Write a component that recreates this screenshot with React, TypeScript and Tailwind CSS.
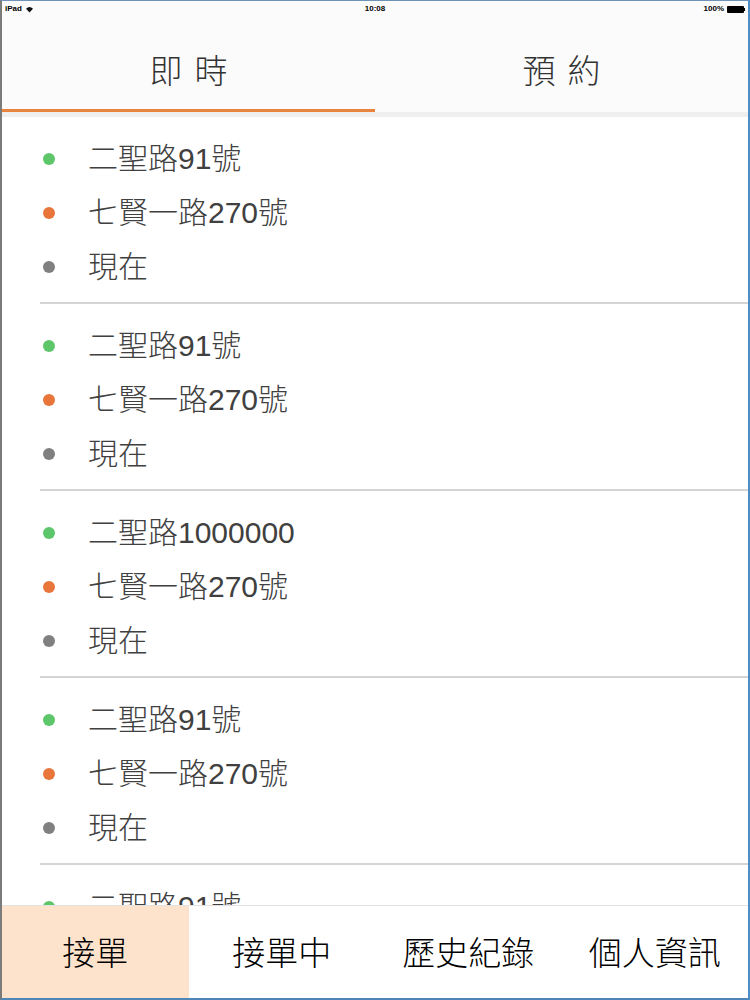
import React from "react";

const groups = [
  ["二聖路91號", "七賢一路270號", "現在"],
  ["二聖路91號", "七賢一路270號", "現在"],
  ["二聖路1000000", "七賢一路270號", "現在"],
  ["二聖路91號", "七賢一路270號", "現在"],
  ["二聖路91號", "七賢一路270號", "現在"],
];

const dotColors = ["bg-[#5dc66a]", "bg-[#e8763a]", "bg-[#808080]"];

function Group({ rows }: { rows: string[] }) {
  return (
    <div className="pt-[15px]">
      <div className="flex flex-col">
        {rows.map((r, i) => (
          <div key={i} className="flex items-center h-[54px]">
            <div className="w-[86px] flex items-center">
              <span className={`ml-[41px] w-[12px] h-[12px] rounded-full ${dotColors[i]}`} />
            </div>
            <span
              className="text-[30px] text-[#404040] leading-none font-light"
              style={{ fontFamily: '"Liberation Sans", "Noto Sans CJK TC", sans-serif' }}
            >
              {r}
            </span>
          </div>
        ))}
      </div>
      <div className="mt-[8px] ml-[38px] h-[2px] bg-[#d4d4d4]" />
    </div>
  );
}

export default function App() {
  const cjk = { fontFamily: '"Noto Sans CJK TC", sans-serif' };
  return (
    <div
      className="w-[750px] h-[1000px] flex flex-col bg-white overflow-hidden border-l-2 border-l-[#7b7b7b] border-r-2 border-r-[#4d8ec7] border-t border-t-[#6e93b8] border-b-2 border-b-[#4f86b8]"
      style={{ fontFamily: '"Liberation Sans", "Noto Sans CJK TC", sans-serif' }}
    >
      {/* status bar */}
      <div className="h-[16px] flex items-center justify-between px-[3px] text-[8px] text-black bg-[#fbfbfb] relative shrink-0">
        <div className="flex items-center gap-[3px]">
          <span className="font-semibold">iPad</span>
          <svg width="9" height="7" viewBox="0 0 10 8">
            <path d="M5 7.5 L1 3 A6 6 0 0 1 9 3 Z" fill="#111" />
          </svg>
        </div>
        <span className="absolute left-1/2 -translate-x-1/2 font-semibold">10:08</span>
        <div className="flex items-center gap-[3px]">
          <span className="font-semibold">100%</span>
          <div className="flex items-center">
            <div className="w-[17px] h-[7px] bg-black rounded-[1px]" />
            <div className="w-[1px] h-[3px] bg-black" />
          </div>
        </div>
      </div>
      {/* tabs */}
      <div className="h-[95px] flex bg-[#fbfbfb] shrink-0">
        <div className="flex-1 flex flex-col">
          <div className="flex-1 flex items-center justify-center pt-[14px]">
            <span className="text-[33px] text-[#333] tracking-[12px] pl-[12px] font-light" style={cjk}>即時</span>
          </div>
          <div className="h-[3px] bg-[#e8843e]" />
        </div>
        <div className="flex-1 flex flex-col">
          <div className="flex-1 flex items-center justify-center pt-[14px]">
            <span className="text-[33px] text-[#333] tracking-[12px] pl-[12px] font-light" style={cjk}>預約</span>
          </div>
          <div className="h-[3px]" />
        </div>
      </div>
      <div className="h-[5px] bg-[#efefef] shrink-0" />
      {/* list */}
      <div className="flex-1 overflow-hidden">
        {groups.map((g, i) => (
          <Group key={i} rows={g} />
        ))}
      </div>
      {/* bottom nav */}
      <div className="h-[93px] shrink-0 flex border-t border-t-[#e2e2e2] bg-white">
        {["接單", "接單中", "歷史紀錄", "個人資訊"].map((t, i) => (
          <div
            key={t}
            className={`flex-1 flex items-center justify-center pb-[2px] ${i === 0 ? "bg-[#fde3cc]" : ""}`}
          >
            <span className="text-[33px] text-black leading-none font-light" style={cjk}>{t}</span>
          </div>
        ))}
      </div>
    </div>
  );
}
